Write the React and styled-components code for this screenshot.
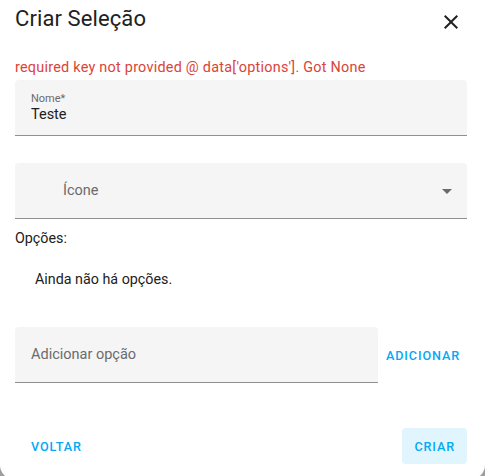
import React from 'react'
import styled, { createGlobalStyle } from 'styled-components'

const GlobalStyle = createGlobalStyle`
  html, body {
    margin: 0;
    padding: 0;
    height: 100%;
    overflow: hidden;
    background: #9e9e9e;
    font-family: Roboto, "Noto Sans", sans-serif;
  }
`

const Dialog = styled.div`
  width: 485px;
  background: #fff;
  border-radius: 0 0 14px 14px;
  display: flex;
  flex-direction: column;
  padding-bottom: 15px;
`

const Header = styled.div`
  display: flex;
  justify-content: space-between;
  align-items: flex-start;
  height: 58px;
  padding-left: 15px;
  padding-right: 22px;
`

const Title = styled.h2`
  margin: 5px 0 0;
  font-size: 22px;
  line-height: 28px;
  font-weight: 400;
  letter-spacing: 0.1px;
  color: #212121;
`

const CloseButton = styled.button`
  margin-top: 10px;
  padding: 0;
  width: 24px;
  height: 24px;
  border: none;
  background: none;
  color: #212121;
  cursor: pointer;
`

const Content = styled.div`
  display: flex;
  flex-direction: column;
  padding: 0 18px 0 15px;
`

const ErrorText = styled.div`
  font-size: 14.4px;
  line-height: 20px;
  letter-spacing: 0.25px;
  color: #db4437;
  margin-bottom: 2px;
`

const Field = styled.div`
  box-sizing: border-box;
  height: 56px;
  background: #f5f5f5;
  border-radius: 4px 4px 0 0;
  border-bottom: 1px solid #8f8f8f;
  display: flex;
  flex-direction: column;
  justify-content: ${(p) => (p.$filled ? 'flex-start' : 'center')};
  padding-top: ${(p) => (p.$filled ? 11 : 0)}px;
  padding-left: ${(p) => p.$indent || 16}px;
  padding-right: 16px;
  margin-top: ${(p) => p.$top || 0}px;
  position: relative;
  flex: ${(p) => (p.$grow ? 1 : 'none')};
`

const FieldLabel = styled.span`
  font-size: 11px;
  line-height: 15px;
  color: #6b6b6b;
`

const FieldValue = styled.span`
  font-size: 14.5px;
  line-height: 17px;
  color: #212121;
`

const Placeholder = styled.span`
  font-size: 14.5px;
  line-height: 20px;
  color: #6b6b6b;
`

const DropArrow = styled.svg`
  position: absolute;
  right: 8px;
  top: 16px;
  width: 24px;
  height: 24px;
  fill: #6b6b6b;
`

const Text = styled.div`
  font-size: 14.3px;
  line-height: 20px;
  color: #212121;
  margin-top: ${(p) => p.$top || 0}px;
  padding-left: ${(p) => p.$indent || 0}px;
`

const AddRow = styled.div`
  display: flex;
  align-items: center;
  margin-top: 38px;
  margin-right: -1px;
`

const TextButton = styled.button`
  border: none;
  background: ${(p) => (p.$tonal ? '#e1f5fe' : 'transparent')};
  color: #03a9f4;
  font-family: Roboto, "Noto Sans", sans-serif;
  font-size: 12.6px;
  font-weight: 500;
  letter-spacing: 0.9px;
  text-transform: uppercase;
  height: 36px;
  padding: 0 ${(p) => (p.$tonal ? '12px' : '8px')};
  border-radius: 4px;
  cursor: pointer;
`

const Footer = styled.div`
  display: flex;
  justify-content: space-between;
  align-items: center;
  margin-top: 45px;
  padding: 0 18px 0 23px;
`

export default function App() {
  return (
    <>
      <GlobalStyle />
      <Dialog>
        <Header>
          <Title>Criar Seleção</Title>
          <CloseButton aria-label="Fechar">
            <svg viewBox="0 0 24 24" width="24" height="24" fill="currentColor">
              <path d="M19,6.41L17.59,5L12,10.59L6.41,5L5,6.41L10.59,12L5,17.59L6.41,19L12,13.41L17.59,19L19,17.59L13.41,12L19,6.41Z" />
            </svg>
          </CloseButton>
        </Header>

        <Content>
          <ErrorText>required key not provided @ data['options']. Got None</ErrorText>

          <Field $filled>
            <FieldLabel>Nome*</FieldLabel>
            <FieldValue>Teste</FieldValue>
          </Field>

          <Field $top={27} $indent={48}>
            <Placeholder>Ícone</Placeholder>
            <DropArrow viewBox="0 0 24 24">
              <path d="M7,10L12,15L17,10H7Z" />
            </DropArrow>
          </Field>

          <Text $top={9}>Opções:</Text>
          <Text $top={21} $indent={20}>Ainda não há opções.</Text>

          <AddRow>
            <Field $grow>
              <Placeholder>Adicionar opção</Placeholder>
            </Field>
            <TextButton>Adicionar</TextButton>
          </AddRow>
        </Content>

        <Footer>
          <TextButton>Voltar</TextButton>
          <TextButton $tonal>Criar</TextButton>
        </Footer>
      </Dialog>
    </>
  )
}
